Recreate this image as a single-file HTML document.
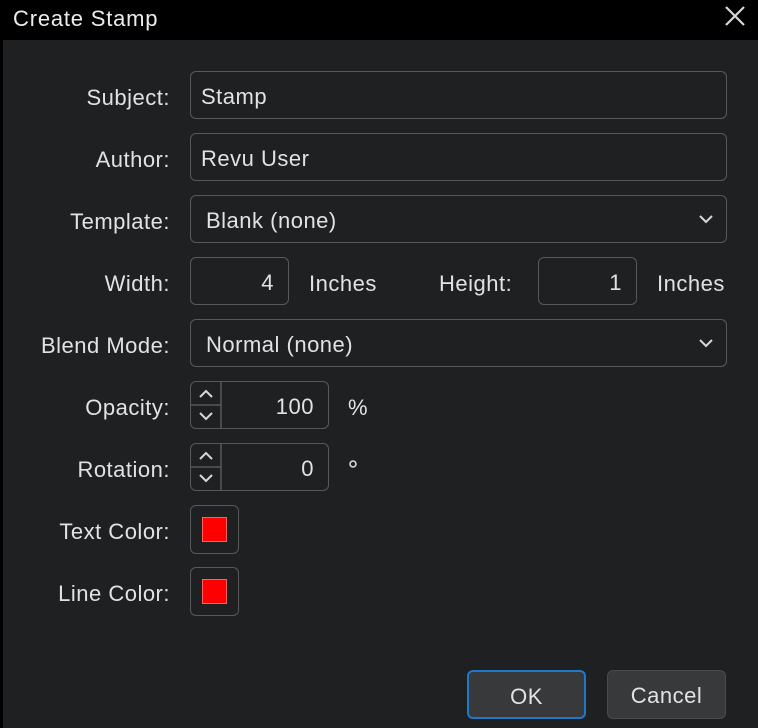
<!DOCTYPE html>
<html><head><meta charset="utf-8"><style>
*{box-sizing:border-box;margin:0;padding:0}
body{width:758px;height:728px;background:#000;font-family:"Liberation Sans",sans-serif;color:#e2e2e2;font-size:22px;letter-spacing:0.5px;position:relative;overflow:hidden}
.title{position:absolute;left:13px;top:6px;font-size:22px;letter-spacing:0.8px;color:#ececec}
.close{position:absolute;left:724px;top:5px}
.body{position:absolute;left:3px;top:40px;right:0;bottom:0;background:#1f2022}
.lbl{position:absolute;right:588px;text-align:right;white-space:nowrap}
.box{position:absolute;border:1.5px solid #58595b;border-radius:6px;background:#1f2022}
.box span{position:absolute;top:12px}
.chev{position:absolute;right:12px;top:17px}
.sw{position:absolute;left:11px;top:11px;width:25px;height:25px;background:#ff0000;border:1px solid #ff6060}
.btn{position:absolute;top:670px;height:49px;width:119px;border-radius:6px;background:#38393b;border:1.5px solid #4a4b4d;text-align:center;line-height:49px;font-size:22px}
</style></head><body>
<div class="title">Create Stamp</div>
<svg class="close" width="22" height="22" viewBox="0 0 22 22"><path d="M2 2L20 20M20 2L2 20" stroke="#d8d8d8" stroke-width="2.2"/></svg>
<div class="body"></div>

<div class="lbl" style="top:85px">Subject:</div>
<div class="box" style="left:190px;top:71px;width:537px;height:48px"><span style="left:10px">Stamp</span></div>

<div class="lbl" style="top:147px">Author:</div>
<div class="box" style="left:190px;top:133px;width:537px;height:48px"><span style="left:10px">Revu User</span></div>

<div class="lbl" style="top:209px">Template:</div>
<div class="box" style="left:190px;top:195px;width:537px;height:48px"><span style="left:15px">Blank (none)</span>
<svg class="chev" width="16" height="12" viewBox="0 0 16 12"><path d="M2 3L8 9L14 3" fill="none" stroke="#d8d8d8" stroke-width="2"/></svg></div>

<div class="lbl" style="top:271px">Width:</div>
<div class="box" style="left:190px;top:257px;width:99px;height:48px"><span style="right:14px">4</span></div>
<div style="position:absolute;left:309px;top:271px">Inches</div>
<div style="position:absolute;left:439px;top:271px">Height:</div>
<div class="box" style="left:538px;top:257px;width:99px;height:48px"><span style="right:14px">1</span></div>
<div style="position:absolute;left:657px;top:271px">Inches</div>

<div class="lbl" style="top:333px">Blend Mode:</div>
<div class="box" style="left:190px;top:319px;width:537px;height:48px"><span style="left:15px">Normal (none)</span>
<svg class="chev" width="16" height="12" viewBox="0 0 16 12"><path d="M2 3L8 9L14 3" fill="none" stroke="#d8d8d8" stroke-width="2"/></svg></div>

<div class="lbl" style="top:395px">Opacity:</div>
<div class="box" style="left:190px;top:381px;width:139px;height:48px"><span style="right:14px">100</span>
<svg style="position:absolute;left:0;top:0" width="32" height="46" viewBox="0 0 32 46"><path d="M30 0V46M0 23H30" stroke="#58595b" stroke-width="1.5"/><path d="M9 15L15 9L21 15M9 31L15 37L21 31" fill="none" stroke="#d8d8d8" stroke-width="2"/></svg></div>
<div style="position:absolute;left:348px;top:395px">%</div>

<div class="lbl" style="top:457px">Rotation:</div>
<div class="box" style="left:190px;top:443px;width:139px;height:48px"><span style="right:14px">0</span>
<svg style="position:absolute;left:0;top:0" width="32" height="46" viewBox="0 0 32 46"><path d="M30 0V46M0 23H30" stroke="#58595b" stroke-width="1.5"/><path d="M9 15L15 9L21 15M9 31L15 37L21 31" fill="none" stroke="#d8d8d8" stroke-width="2"/></svg></div>
<svg style="position:absolute;left:348px;top:459px" width="10" height="10"><circle cx="5" cy="5" r="3" fill="none" stroke="#d8d8d8" stroke-width="1.6"/></svg>

<div class="lbl" style="top:519px">Text Color:</div>
<div class="box" style="left:190px;top:505px;width:49px;height:49px"><div class="sw"></div></div>

<div class="lbl" style="top:581px">Line Color:</div>
<div class="box" style="left:190px;top:567px;width:49px;height:49px"><div class="sw"></div></div>

<div class="btn" style="left:467px;border:2px solid #1f78c8">OK</div>
<div class="btn" style="left:607px">Cancel</div>
</body></html>
